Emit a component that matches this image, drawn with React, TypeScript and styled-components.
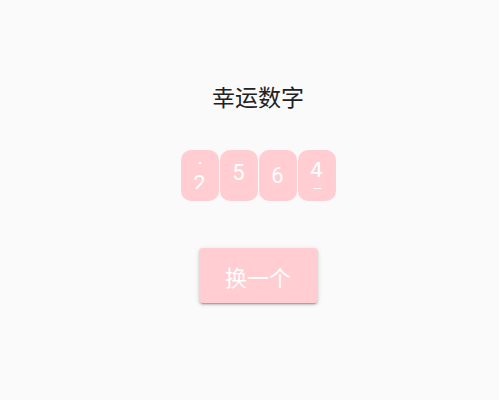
import React from "react";
import styled, {createGlobalStyle} from "styled-components";

const GlobalStyle = createGlobalStyle`
  html, body {
    margin: 0;
    padding: 0;
    background: #fafafa;
  }
`;

const ROW = 27;

const Page = styled.div`
  display: flex;
  flex-direction: column;
  align-items: center;
  width: 499px;
  height: 400px;
  box-sizing: border-box;
  padding: 81px 0 0 17px;
  background: #fafafa;
  font-family: Roboto, "Noto Sans CJK SC", sans-serif;
`;

const Title = styled.h1`
  margin: 0;
  font-family: "Noto Sans CJK SC", sans-serif;
  font-weight: 400;
  font-size: 23px;
  line-height: 30px;
  color: #212121;
`;

const Digits = styled.div`
  display: flex;
  gap: 1px;
  margin-top: 39px;
`;

const Box = styled.div`
  width: 38px;
  height: 51px;
  border-radius: 10px;
  background: #ffcdd2;
  display: flex;
  align-items: center;
  justify-content: center;
`;

const Window = styled.div`
  height: ${ROW}px;
  width: 100%;
  overflow: hidden;
`;

const Strip = styled.div`
  display: flex;
  flex-direction: column;
  align-items: center;
`;

const Digit = styled.span`
  height: ${ROW}px;
  line-height: ${ROW}px;
  font-family: Roboto, sans-serif;
  font-size: 22px;
  color: #fff;
`;

const Button = styled.button`
  margin-top: 47px;
  width: 119px;
  height: 55px;
  border: none;
  border-radius: 4px;
  background: #ffcdd2;
  color: #fff;
  font-family: "Noto Sans CJK SC", sans-serif;
  font-size: 22px;
  box-shadow: 0 3px 1px -2px rgba(0, 0, 0, .2), 0 2px 2px 0 rgba(0, 0, 0, .14), 0 1px 5px 0 rgba(0, 0, 0, .12);
  cursor: pointer;
`;

// fractional positions: the reels are caught mid-spin
const reels = [1.7, 5.11, 6.0, 4.23];
const numbers = [0, 1, 2, 3, 4, 5, 6, 7, 8, 9];

const App = () => {
    return (<Page>
        <GlobalStyle/>
        <Title>幸运数字</Title>
        <Digits>
            {reels.map((value, i) => (
                <Box key={i}>
                    <Window>
                        <Strip style={{transform: `translateY(${-value * ROW}px)`}}>
                            {numbers.map(n => <Digit key={n}>{n}</Digit>)}
                        </Strip>
                    </Window>
                </Box>
            ))}
        </Digits>
        <Button>换一个</Button>
    </Page>)
}

export default App;
